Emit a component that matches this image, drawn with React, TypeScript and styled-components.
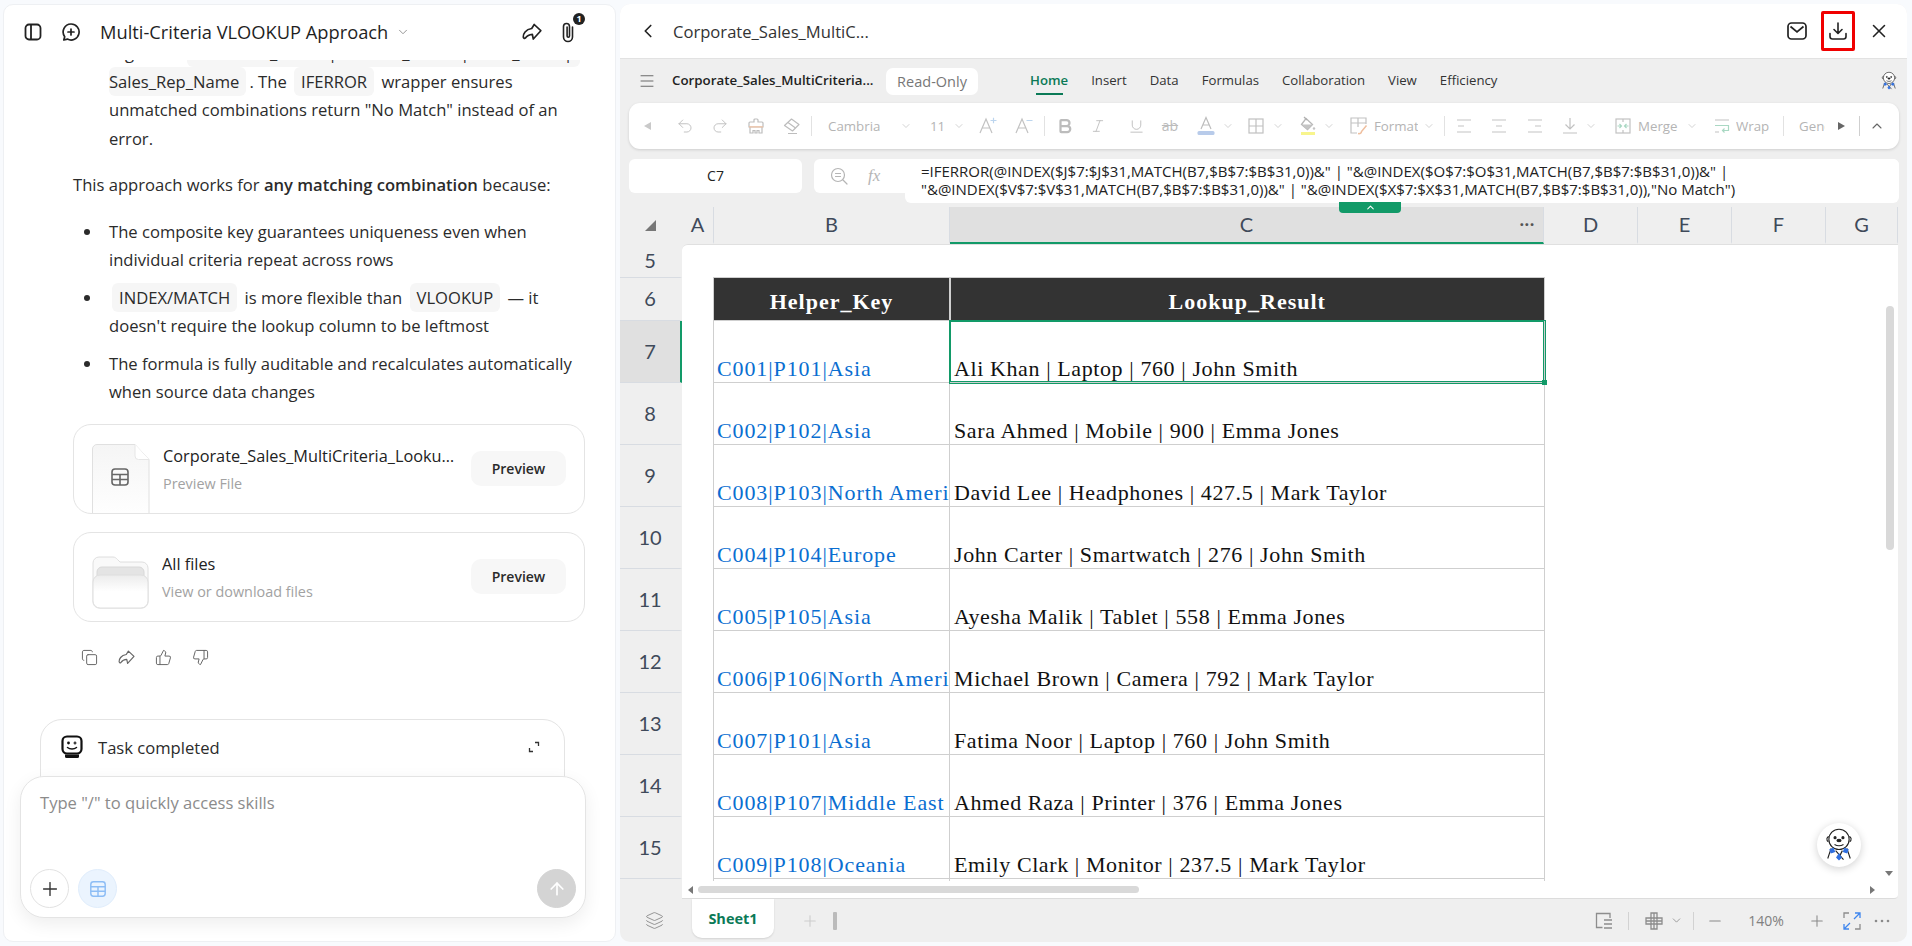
import React from 'react';
import styled, { createGlobalStyle } from 'styled-components';
import {
  ArrowUp,
  Bold,
  ChevronDown,
  ChevronLeft,
  ChevronUp,
  Copy,
  Italic,
  Layers,
  Menu,
  Minus,
  Plus,
  Redo2,
  ThumbsDown,
  ThumbsUp,
  Underline,
  Undo2,
  X,
} from 'lucide-react';

const sans = '"Open Sans", "Noto Sans", sans-serif';
const serif = '"Liberation Serif", serif';

const GlobalStyle = createGlobalStyle`
  html, body {
    margin: 0;
    height: 100%;
    overflow: hidden;
    background: #f8fafd;
    font-family: ${sans};
  }
  * { box-sizing: border-box; }
`;

const Page = styled.div`
  display: grid;
  grid-template-columns: 613px 1287px;
  gap: 4px;
  height: 946px;
  padding: 4px 0 4px 3px;
`;

/* ---------- chat side ---------- */

const ChatPanel = styled.section`
  display: flex;
  flex-direction: column;
  background: #fff;
  border-radius: 10px;
  border: 1px solid #eef0f3;
  overflow: hidden;
`;

const ChatHeader = styled.header`
  display: flex;
  align-items: center;
  flex: none;
  height: 55px;
  padding: 0 0 2px 19px;
  color: #1d1d1d;
`;

const HeaderIcon = styled.span<{ $ml?: number }>`
  display: flex;
  margin-left: ${(p) => p.$ml ?? 0}px;
`;

const ChatTitle = styled.h1`
  margin: 0 0 0 19px;
  width: 290px;
  font-size: 18.3px;
  font-weight: 400;
  color: #1f1f1f;
  white-space: nowrap;
`;

const ClipWrap = styled.span`
  position: relative;
  display: flex;
  margin-left: 16px;
`;

const CountBadge = styled.span`
  position: absolute;
  top: -8px;
  right: -7px;
  width: 12px;
  height: 12px;
  border-radius: 50%;
  background: #222;
  color: #fff;
  font-size: 9px;
  font-weight: 700;
  line-height: 12px;
  text-align: center;
`;

const ChatScroll = styled.div`
  flex: 1;
  min-height: 0;
  overflow: hidden;
  padding: 0 30px 0 69px;
  font-size: 16.6px;
  color: #2b2b2b;
`;

const NestedText = styled.p`
  margin: -21px 0 0;
  padding-left: 36px;
  line-height: 28.5px;
  white-space: nowrap;
`;

const Para = styled.p`
  margin: 18px 0 0;
  line-height: 28.5px;
  white-space: nowrap;

  strong {
    font-weight: 600;
  }
`;

const Points = styled.ul`
  margin: 18px 0 0;
  padding: 0 0 0 36px;
  list-style: none;
`;

const Point = styled.li`
  position: relative;
  line-height: 28px;
  white-space: nowrap;

  & + & {
    margin-top: 10px;
  }

  &::before {
    content: '';
    position: absolute;
    left: -25px;
    top: 11px;
    width: 6px;
    height: 6px;
    border-radius: 50%;
    background: #2b2b2b;
  }
`;

const Code = styled.code<{ $flush?: boolean }>`
  font-family: inherit;
  background: #f6f6f6;
  border-radius: 6px;
  padding: 3px 7px 3px ${(p) => (p.$flush ? 0 : 7)}px;
  margin: 0 3px 0 ${(p) => (p.$flush ? 0 : 3)}px;
`;

const FileCard = styled.div`
  display: flex;
  height: 90px;
  margin-top: 18px;
  padding-left: 18px;
  border: 1px solid #e4e4e4;
  border-radius: 18px;
  overflow: hidden;
  align-items: center;
`;

const CardIcon = styled.span<{ $top: number }>`
  flex: none;
  display: flex;
  align-self: flex-start;
  margin-top: ${(p) => p.$top}px;
`;

const CardText = styled.div`
  flex: 1;
  min-width: 0;
  margin-left: 13px;
`;

const CardName = styled.div`
  font-size: 16.3px;
  line-height: 22px;
  color: #222;
  white-space: nowrap;
  overflow: hidden;
  text-overflow: ellipsis;
`;

const CardSub = styled.div`
  margin-top: 8px;
  font-size: 14.4px;
  line-height: 18px;
  color: #a2a2a2;
`;

const PreviewButton = styled.button`
  flex: none;
  width: 95px;
  height: 35px;
  margin: 0 18px 0 13px;
  border: 0;
  border-radius: 10px;
  background: #f7f7f7;
  font-family: inherit;
  font-size: 14px;
  font-weight: 600;
  color: #2a2a2a;
`;

const Actions = styled.div`
  display: flex;
  align-items: center;
  gap: 20px;
  margin: 27px 0 0 8px;
  color: #666;
`;

const TaskCard = styled.div`
  display: flex;
  align-items: center;
  flex: none;
  height: 62px;
  margin: 0 50px -5px 36px;
  padding: 0 24px 6px 20px;
  border: 1px solid #e4e4e4;
  border-radius: 22px 22px 0 0;
  font-size: 16.6px;
  color: #2b2b2b;
`;

const TaskLabel = styled.span`
  flex: 1;
  margin-left: 15px;
`;

const InputBox = styled.div`
  position: relative;
  display: flex;
  flex-direction: column;
  justify-content: space-between;
  flex: none;
  height: 142px;
  margin: 0 29px 23px 16px;
  padding: 15px 9px 9px 9px;
  background: #fff;
  border: 1px solid #e4e4e4;
  border-radius: 24px;
  box-shadow: 0 6px 18px rgba(0, 0, 0, 0.07);
`;

const Placeholder = styled.div`
  padding-left: 10px;
  font-size: 16.6px;
  line-height: 22px;
  color: #8b8b8b;
`;

const InputTools = styled.div`
  display: flex;
  align-items: center;
  gap: 9px;
`;

const RoundButton = styled.span<{ $tone: 'plain' | 'blue' | 'send' }>`
  display: flex;
  align-items: center;
  justify-content: center;
  width: 39px;
  height: 39px;
  border-radius: 50%;
  margin-left: ${(p) => (p.$tone === 'send' ? 'auto' : '0')};
  color: ${(p) => (p.$tone === 'blue' ? '#8dbdf5' : p.$tone === 'send' ? '#fff' : '#333')};
  background: ${(p) => (p.$tone === 'blue' ? '#ebf4fe' : p.$tone === 'send' ? '#d4d4d4' : '#fff')};
  border: 1px solid ${(p) => (p.$tone === 'plain' ? '#e2e2e2' : p.$tone === 'blue' ? '#e0edfc' : '#d4d4d4')};
`;

/* ---------- sheet side ---------- */

const SheetPanel = styled.section`
  display: flex;
  flex-direction: column;
  background: #efefef;
  border-radius: 10px;
  overflow: hidden;
`;

const DocHeader = styled.header`
  display: flex;
  align-items: center;
  flex: none;
  height: 55px;
  padding: 0 11px 0 17px;
  background: #fff;
  border-bottom: 1px solid #e2e2e2;
  color: #222;
`;

const DocTitle = styled.div`
  flex: 1;
  margin-left: 14px;
  font-size: 16.6px;
  color: #333;
`;

const DocAction = styled.span<{ $marked?: boolean }>`
  display: flex;
  align-items: center;
  justify-content: center;
  width: 34px;
  height: 40px;
  margin-left: 7px;
  border: ${(p) => (p.$marked ? '3px solid #f00000' : '0')};
  border-radius: 2px;
`;

const MenuRow = styled.div`
  display: flex;
  align-items: center;
  flex: none;
  height: 44px;
  padding-left: 18px;
  color: #666;
`;

const FileName = styled.strong`
  width: 214px;
  margin: 0 0 2px 16px;
  font-size: 13.3px;
  font-weight: 600;
  color: #222;
  white-space: nowrap;
`;

const ReadOnly = styled.span`
  width: 92px;
  height: 27px;
  background: #fff;
  border-radius: 7px;
  font-size: 14.5px;
  line-height: 28px;
  text-align: center;
  color: #777;
`;

const TabList = styled.nav`
  display: flex;
  gap: 23px;
  margin: -3px 0 0 52px;
  align-items: center;
`;

const MenuTab = styled.span<{ $active?: boolean }>`
  position: relative;
  font-size: 13.2px;
  font-weight: ${(p) => (p.$active ? 600 : 400)};
  color: ${(p) => (p.$active ? '#0b7a57' : '#333')};

  &::after {
    content: '';
    display: ${(p) => (p.$active ? 'block' : 'none')};
    position: absolute;
    left: 6px;
    right: 5px;
    bottom: -6px;
    height: 2px;
    background: #0b7a57;
  }
`;

const MenuEnd = styled.span`
  display: flex;
  margin-left: auto;
  margin-right: 8px;
`;

const Ribbon = styled.div`
  display: flex;
  align-items: center;
  flex: none;
  height: 46px;
  margin: 0 8px 0 9px;
  padding-left: 6px;
  background: #fff;
  border-radius: 11px;
  box-shadow: 0 1px 3px rgba(0, 0, 0, 0.14);
  color: #bcbcbc;
`;

const RibbonSlot = styled.span<{ $ml: number; $w?: number; $strong?: boolean }>`
  flex: none;
  display: flex;
  align-items: center;
  justify-content: center;
  width: ${(p) => p.$w ?? 24}px;
  margin-left: ${(p) => p.$ml}px;
  color: ${(p) => (p.$strong ? '#666' : 'inherit')};
`;

const RibbonText = styled.span<{ $ml: number; $w: number }>`
  flex: none;
  width: ${(p) => p.$w}px;
  margin-left: ${(p) => p.$ml}px;
  overflow: hidden;
  font-size: 13.3px;
  color: #b4b4b4;
  white-space: nowrap;
`;

const StruckText = styled.span`
  font-size: 14px;
  line-height: 16px;
  color: #bcbcbc;
  text-decoration: line-through;
`;

const RibbonSep = styled.span<{ $ml: number; $dark?: boolean }>`
  flex: none;
  width: 1px;
  height: 20px;
  margin-left: ${(p) => p.$ml}px;
  background: ${(p) => (p.$dark ? '#cfcfcf' : '#e2e2e2')};
`;

const FormulaRow = styled.div`
  position: relative;
  display: flex;
  flex: none;
  gap: 12px;
  height: 34px;
  margin: 10px 8px 14px 9px;
`;

const NameBox = styled.div`
  width: 173px;
  background: #fff;
  border-radius: 6px;
  font-size: 14px;
  line-height: 34px;
  text-align: center;
  color: #222;
`;

const FxBox = styled.div`
  display: flex;
  align-items: center;
  flex: 1;
  padding-left: 16px;
  gap: 20px;
  background: #fff;
  border-radius: 6px;
  color: #b5b5b5;
`;

const FxLabel = styled.span`
  font-family: ${serif};
  font-size: 17px;
  font-style: italic;
`;

const FormulaOverlay = styled.div`
  position: absolute;
  z-index: 5;
  top: 0;
  left: 276px;
  right: 0;
  height: 44px;
  padding: 3px 10px 0 16px;
  background: #fff;
  border-radius: 6px;
  font-size: 15px;
  line-height: 18px;
  color: #222;
  white-space: nowrap;
`;

const HeaderRow = styled.div`
  display: flex;
  flex: none;
  height: 37px;
  margin-right: 9px;
  overflow: visible;
`;

const Corner = styled.div`
  display: flex;
  align-items: center;
  width: 64px;
  padding-left: 25px;
`;

const ColHead = styled.div<{ $w: number; $active?: boolean }>`
  position: relative;
  flex: none;
  width: ${(p) => p.$w}px;
  height: 37px;
  font-family: Lato, sans-serif;
  font-size: 20px;
  line-height: 35px;
  text-align: center;
  color: #3f4a5a;
  background: ${(p) => (p.$active ? '#e0e0e0' : 'transparent')};
  border-right: 1px solid #d8dce2;
  border-bottom: 2px solid ${(p) => (p.$active ? '#129a68' : 'transparent')};
`;

const ColDots = styled.span`
  position: absolute;
  right: 8px;
  top: -1px;
  font-size: 15px;
  font-weight: 700;
  color: #555;
  letter-spacing: 1px;
`;

const CollapseTab = styled.span`
  position: absolute;
  z-index: 6;
  top: -5px;
  left: 389px;
  display: flex;
  justify-content: center;
  width: 62px;
  height: 11px;
  background: #129a68;
  border-radius: 0 0 4px 4px;
  color: #fff;
`;

const SheetBody = styled.div`
  display: flex;
  flex: 1;
  min-height: 0;
  margin-right: 9px;
`;

const RowHeads = styled.div`
  flex: none;
  width: 62px;
  overflow: hidden;
`;

const RowHead = styled.div<{ $h: number; $active?: boolean }>`
  height: ${(p) => p.$h}px;
  font-family: Lato, sans-serif;
  font-size: 20px;
  line-height: ${(p) => p.$h - 2}px;
  text-align: center;
  color: #3f4a5a;
  background: ${(p) => (p.$active ? '#e0e0e0' : 'transparent')};
  border-bottom: 1px solid #d8dce2;
  border-right: 2px solid ${(p) => (p.$active ? '#129a68' : 'transparent')};
`;

const Surface = styled.div`
  position: relative;
  display: flex;
  flex-direction: column;
  flex: 1;
  min-width: 0;
  background: #fff;
  border-top: 1px solid #e0e0e0;
  border-bottom: 1px solid #dcdcdc;
  border-radius: 6px 0 4px 0;
`;

const TableClip = styled.div`
  flex: 1;
  min-height: 0;
  overflow: hidden;
  padding-left: 31px;
`;

const TableRow = styled.div<{ $h: number }>`
  display: grid;
  grid-template-columns: 237px 594.5px;
  height: ${(p) => p.$h}px;
`;

const HeadCell = styled.div`
  display: flex;
  align-items: center;
  justify-content: center;
  padding-top: 5px;
  background: #333;
  border: 1px solid #cfcfcf;
  font-family: ${serif};
  font-size: 22px;
  font-weight: 700;
  letter-spacing: 1px;
  color: #fff;
`;

const Cell = styled.div<{ $link?: boolean; $active?: boolean }>`
  position: relative;
  z-index: ${(p) => (p.$active ? 1 : 0)};
  display: flex;
  align-items: flex-end;
  overflow: ${(p) => (p.$active ? 'visible' : 'hidden')};
  padding: 0 0 1px ${(p) => (p.$link ? 3 : 4)}px;
  border-right: 1px solid #cfcfcf;
  border-bottom: 1px solid #cfcfcf;
  border-left: ${(p) => (p.$link ? '1px solid #cfcfcf' : '0')};
  font-family: ${serif};
  font-size: 22px;
  line-height: 24px;
  letter-spacing: ${(p) => (p.$link ? 0.9 : 0.6)}px;
  white-space: nowrap;
  color: ${(p) => (p.$link ? '#0a6ed1' : '#111')};
  box-shadow: ${(p) => (p.$active ? '0 0 0 1px #129a68, inset 0 0 0 1px #129a68' : 'none')};

  &::after {
    content: '';
    display: ${(p) => (p.$active ? 'block' : 'none')};
    position: absolute;
    right: -3px;
    bottom: -3px;
    width: 5px;
    height: 5px;
    background: #129a68;
  }
`;

const HScrollTrack = styled.div`
  display: flex;
  align-items: center;
  flex: none;
  height: 17px;
  padding-left: 6px;
  gap: 5px;
`;

const ArrowLeft = styled.span`
  width: 0;
  height: 0;
  border: 4px solid transparent;
  border-left: 0;
  border-right: 5px solid #777;
`;

const HThumb = styled.span`
  width: 441px;
  height: 7px;
  border-radius: 4px;
  background: #d9d9d9;
`;

const VThumb = styled.span`
  position: absolute;
  top: 61px;
  right: 4px;
  width: 8px;
  height: 244px;
  border-radius: 4px;
  background: #d9d9d9;
`;

const ArrowDownMark = styled.span`
  position: absolute;
  right: 5px;
  bottom: 22px;
  width: 0;
  height: 0;
  border: 4px solid transparent;
  border-bottom: 0;
  border-top: 5px solid #777;
`;

const ArrowRightMark = styled.span`
  position: absolute;
  right: 23px;
  bottom: 4px;
  width: 0;
  height: 0;
  border: 4px solid transparent;
  border-right: 0;
  border-left: 5px solid #777;
`;

const FloatBot = styled.span`
  position: absolute;
  right: 37px;
  bottom: 31px;
  display: flex;
  align-items: center;
  justify-content: center;
  width: 44px;
  height: 44px;
  border-radius: 50%;
  background: #fff;
  box-shadow: 0 2px 8px rgba(0, 0, 0, 0.18);
`;

const TabBar = styled.footer`
  display: flex;
  flex: none;
  height: 43px;
  padding-left: 25px;
  color: #8a8a8a;
`;

const TabBarIcon = styled.span`
  display: flex;
  align-self: center;
  width: 47px;
  color: #8f8f8f;
`;

const SheetTab = styled.span`
  width: 82px;
  height: 39px;
  background: #fff;
  border-radius: 0 0 10px 10px;
  box-shadow: 0 1px 2px rgba(0, 0, 0, 0.12);
  font-size: 14.5px;
  font-weight: 700;
  line-height: 39px;
  text-align: center;
  color: #0b7a57;
`;

const AddSheet = styled.span`
  display: flex;
  align-self: center;
  margin-left: 27px;
  color: #cdcdcd;
`;

const Handle = styled.span`
  align-self: center;
  width: 4px;
  height: 18px;
  margin-left: 14px;
  border-radius: 1px;
  background: #bbb;
`;

const StatusTools = styled.div`
  display: flex;
  align-items: center;
  margin-left: auto;
  padding-right: 17px;
`;

const StatusItem = styled.span<{ $ml: number }>`
  display: flex;
  margin-left: ${(p) => p.$ml}px;
  color: #8a8a8a;
`;

const StatusDivider = styled.span<{ $ml: number }>`
  width: 1px;
  height: 18px;
  margin-left: ${(p) => p.$ml}px;
  background: #d2d2d2;
`;

const Zoom = styled.span`
  width: 50px;
  margin-left: 17px;
  font-size: 14px;
  text-align: center;
  color: #808080;
`;

/* ---------- drawn icons ---------- */

const SidebarIcon = () => (
  <svg width="20" height="20" viewBox="0 0 20 20" fill="none" stroke="#222" strokeWidth="1.8">
    <rect x="2.5" y="2.5" width="15" height="15" rx="3.5" />
    <path d="M8 2.5v15" />
  </svg>
);

const NewChatIcon = () => (
  <svg width="20" height="20" viewBox="0 0 20 20" fill="none" stroke="#222" strokeWidth="1.7" strokeLinecap="round">
    <path d="M10 2a8 8 0 1 1-3.6 15.1L2.8 18l.9-3.3A8 8 0 0 1 10 2z" strokeLinejoin="round" />
    <path d="M10 7v6M7 10h6" />
  </svg>
);

const ShareIcon = ({ size = 20, color = '#222', stroke = 1.7 }: { size?: number; color?: string; stroke?: number }) => (
  <svg width={size} height={size} viewBox="0 0 20 20" fill="none" stroke={color} strokeWidth={stroke} strokeLinejoin="round">
    <path d="M12.200 2.500L18.800 8.700 11.300 17 10.300 12.300C7 12.500 4.800 14 3.200 16.200 2.500 16.800 1.500 16 1.300 15 1 12 3.500 7.500 9.700 6.500z" />
  </svg>
);

const ClipIcon = () => (
  <svg width="20" height="22" viewBox="0 0 20 22" fill="none" stroke="#222" strokeWidth="1.6" strokeLinecap="round">
    <path d="M14.500 6v10a4.500 4.500 0 0 1-9 0V5.500a3 3 0 0 1 6 0V15a1.200 1.200 0 0 1-2.400 0V6" />
  </svg>
);

const TableGlyph = ({ size = 20, color = '#666' }: { size?: number; color?: string }) => (
  <svg width={size} height={size} viewBox="0 0 20 20" fill="none" stroke={color} strokeWidth="1.6">
    <rect x="2" y="2" width="16" height="16" rx="3" />
    <path d="M2 7.500h16M2 12.500h16M10 7.500V18" />
  </svg>
);

const DocSheet = () => (
  <svg width="58" height="76" viewBox="0 0 58 76" fill="none">
    <defs>
      <linearGradient id="docfill" x1="0" y1="0" x2="0" y2="1">
        <stop offset="0" stopColor="#f5f5f5" />
        <stop offset="1" stopColor="#fff" />
      </linearGradient>
    </defs>
    <path d="M5 .5h38l14 15V76H.5V5A4.500 4.500 0 0 1 5 .5z" fill="url(#docfill)" stroke="#e0e0e0" />
    <path d="M43 .5V12a3.500 3.500 0 0 0 3.500 3.500H57" fill="#fff" stroke="#e6e6e6" />
    <g transform="translate(18 23)">
      <TableGlyph />
    </g>
  </svg>
);

const FolderSheet = () => (
  <svg width="57" height="53" viewBox="0 0 57 53" fill="none">
    <defs>
      <linearGradient id="folderfill" x1="0" y1="0" x2="0" y2="1">
        <stop offset="0" stopColor="#ececec" />
        <stop offset="0.5" stopColor="#fff" />
      </linearGradient>
    </defs>
    <path d="M7 1h14c2 0 3 1 4.500 2.500L28 6h22a6 6 0 0 1 6 6v34a6 6 0 0 1-6 6H7a6 6 0 0 1-6-6V7a6 6 0 0 1 6-6z" fill="#f9f9f9" stroke="#dedede" />
    <rect x="5" y="11" width="47" height="22" rx="5" fill="#e4e4e4" stroke="#d8d8d8" />
    <rect x="1" y="19" width="55" height="33" rx="7" fill="url(#folderfill)" stroke="#dedede" />
  </svg>
);

const TaskBot = () => (
  <svg width="22" height="24" viewBox="0 0 22 24" fill="none">
    <rect x="1.500" y="1.500" width="19" height="17" rx="4.500" fill="#fff" stroke="#111" strokeWidth="2.200" />
    <path d="M4 19.500h14v2a1.500 1.500 0 0 1-1.500 1.500h-11A1.500 1.500 0 0 1 4 21.500z" fill="#111" />
    <circle cx="7.500" cy="8" r="1.400" fill="#111" />
    <path d="M14 6.500v3M12.500 8h3" stroke="#111" strokeWidth="1.200" />
    <path d="M6.500 12.500c2.500 2 6.500 2 9 0" stroke="#111" strokeWidth="1.500" strokeLinecap="round" />
  </svg>
);

const ExpandSmall = () => (
  <svg width="12" height="12" viewBox="0 0 12 12" fill="none" stroke="#333" strokeWidth="1.300">
    <path d="M7 1.500h3.500V5M5 10.500H1.500V7" />
  </svg>
);

const BotFace = ({ size }: { size: number }) => (
  <svg width={size} height={size} viewBox="0 0 32 32" fill="none" stroke="#222" strokeWidth="1">
    <circle cx="16" cy="11" r="9" fill="#fff" />
    <path d="M7 8.500c-2 0-2.500 3.500-.5 4.500M25 8.500c2 0 2.500 3.500.5 4.500" />
    <circle cx="12.500" cy="9.500" r="0.900" fill="#222" />
    <circle cx="19.500" cy="9.500" r="0.900" fill="#222" />
    <ellipse cx="16" cy="12" rx="1.800" ry="1.100" fill="#222" />
    <path d="M12 15.500c2.500 1.500 5.500 1.500 8 0" />
    <path d="M9 19l-3 9M23 19l3 9M13 21l7 8M19 21l-2 4" />
    <path d="M8 20l3-1 1 3-3 1zM24 20l-3-1-1 3 3 1zM16 24l2 3-2 2-2-2z" fill="#2f6fe0" stroke="#2f6fe0" />
  </svg>
);

const AlignGlyph = ({ mode }: { mode: 'left' | 'center' | 'right' }) => {
  const x = mode === 'left' ? 3 : mode === 'center' ? 6 : 9;
  return (
    <svg width="18" height="16" viewBox="0 0 18 16" fill="none" stroke="#c4c4c4" strokeWidth="1.200">
      <path d="M2 2h14M2 14h14" />
      <path d={`M${x} 8h6`} />
    </svg>
  );
};

const PainterGlyph = () => (
  <svg width="18" height="18" viewBox="0 0 18 18" fill="none" stroke="#bdbdbd" strokeWidth="1.200">
    <path d="M7 5V3a1 1 0 0 1 1-1h2a1 1 0 0 1 1 1v2h4a1 1 0 0 1 1 1v4H2V6a1 1 0 0 1 1-1z" />
    <path d="M3 10v6h3v-2.500h2V16h2v-2.500h2V16h3v-6" />
    <path d="M2 9.800h14" stroke="#f1c3a5" />
  </svg>
);

const EraserGlyph = () => (
  <svg width="18" height="18" viewBox="0 0 18 18" fill="none" stroke="#bdbdbd" strokeWidth="1.200" strokeLinejoin="round">
    <path d="M1.500 8.500L8.500 2l7.500 5.500-6.500 6.500z" />
    <path d="M5 5.500l7.500 5.500M5 16.500h9" />
  </svg>
);

const GrowFont = ({ sign }: { sign: 'up' | 'down' }) => (
  <svg width="20" height="18" viewBox="0 0 20 18" fill="none" strokeWidth="1.200">
    <path d="M2 16L8 2l6 14M4.500 11h7" stroke="#c2c2c2" />
    {sign === 'up' ? <path d="M12.500 3.500h6M15.500.8v5.400" stroke="#bcd5ee" /> : <path d="M12.500 3.500h6" stroke="#bcd5ee" />}
  </svg>
);

const ColorA = () => (
  <svg width="20" height="20" viewBox="0 0 20 20" fill="none">
    <path d="M5 13L10 1.500 15 13M6.800 9h6.400" stroke="#bdbdbd" strokeWidth="1.200" />
    <rect x="1.500" y="15" width="17" height="4" rx="1.500" fill="#b8cbea" />
  </svg>
);

const BorderGlyph = () => (
  <svg width="16" height="16" viewBox="0 0 16 16" fill="none" stroke="#c0c0c0" strokeWidth="1.200">
    <rect x="1" y="1" width="14" height="14" />
    <path d="M8 1v14M1 8h14" />
  </svg>
);

const BucketGlyph = () => (
  <svg width="18" height="20" viewBox="0 0 18 20" fill="none">
    <path d="M7 2.500L13.500 8.500 8.500 13.500 2.500 8.500z" fill="#fff" stroke="#b8b8b8" strokeWidth="1.300" />
    <path d="M2.500 8.500h11L8.500 13.500z" fill="#c4c4c4" />
    <path d="M5 1l3 3" stroke="#b0b0b0" strokeWidth="1.300" />
    <circle cx="15" cy="12.500" r="1.200" fill="#c4c4c4" />
    <rect x="2" y="16" width="14" height="3" fill="#f8f58d" />
  </svg>
);

const FormatGlyph = () => (
  <svg width="18" height="18" viewBox="0 0 18 18" fill="none" stroke="#c2c2c2" strokeWidth="1.200">
    <path d="M16 7V1H1v15h6M1 6h15M8 1v9" />
    <path d="M8 16.500c2 .5 3.500-.5 3.500-2l5-6" stroke="#efbf9f" strokeWidth="1.500" />
  </svg>
);

const DownLineGlyph = () => (
  <svg width="18" height="18" viewBox="0 0 18 18" fill="none" stroke="#c2c2c2" strokeWidth="1.200">
    <path d="M9 1v11M4.500 7.500L9 12l4.500-4.500M2 16h14" />
  </svg>
);

const MergeGlyph = () => (
  <svg width="16" height="16" viewBox="0 0 16 16" fill="none" stroke="#c2c2c2" strokeWidth="1.200">
    <rect x="1" y="1" width="14" height="14" />
    <path d="M8 1v3M8 12v3" />
    <path d="M2.500 8h3.500M4.500 6l2 2-2 2M13.500 8H10M11.500 6l-2 2 2 2" stroke="#a9d8c3" />
  </svg>
);

const WrapGlyph = () => (
  <svg width="16" height="16" viewBox="0 0 16 16" fill="none" stroke="#c2c2c2" strokeWidth="1.200">
    <path d="M1 2h14M1 14h4" />
    <path d="M1 7.500h13.500v5H8.500M10.500 10.500l-2 2 2 2" stroke="#a9d8c3" />
  </svg>
);

const FindGlyph = () => (
  <svg width="18" height="18" viewBox="0 0 18 18" fill="none" stroke="#b5b5b5" strokeWidth="1.200" strokeLinecap="round">
    <circle cx="8" cy="8" r="6.500" />
    <path d="M13 13l4 4M5.500 6.500h5M5.500 9.500h5" />
  </svg>
);

const SmallTriangle = ({ dir, color }: { dir: 'left' | 'right'; color: string }) => (
  <svg width="9" height="10" viewBox="0 0 9 10">
    <path d={dir === 'left' ? 'M8 1v8L1 5z' : 'M1 1v8l7-4z'} fill={color} />
  </svg>
);

const CornerTriangle = () => (
  <svg width="11" height="11" viewBox="0 0 11 11">
    <path d="M11 0v11H0z" fill="#777" />
  </svg>
);

const SheetListGlyph = () => (
  <svg width="18" height="18" viewBox="0 0 18 18" fill="none" stroke="#8d8d8d" strokeWidth="1.300">
    <path d="M15 6V1.500H1.500v14h6M9 8h8M9 12h8M9 16h8" />
  </svg>
);

const FreezeGlyph = () => (
  <svg width="18" height="18" viewBox="0 0 18 18" fill="none" stroke="#8d8d8d" strokeWidth="1.300">
    <path d="M6 1h6v5h5v6h-5v5H6v-5H1V6h5z" />
    <path d="M6 6h6v6H6zM1 9h16M9 1v16" />
  </svg>
);

const FitGlyph = () => (
  <svg width="18" height="18" viewBox="0 0 18 18" fill="none" strokeWidth="1.300">
    <path d="M1 6V1h5M17 12v5h-5" stroke="#8d8d8d" />
    <path d="M12 1h5v5M17 1l-6 6M6 17H1v-5M1 17l6-6" stroke="#3f86ee" />
  </svg>
);

/* ---------- data ---------- */

const rows = [
  [7, 'C001|P101|Asia', 'Ali Khan | Laptop | 760 | John Smith'],
  [8, 'C002|P102|Asia', 'Sara Ahmed | Mobile | 900 | Emma Jones'],
  [9, 'C003|P103|North America', 'David Lee | Headphones | 427.5 | Mark Taylor'],
  [10, 'C004|P104|Europe', 'John Carter | Smartwatch | 276 | John Smith'],
  [11, 'C005|P105|Asia', 'Ayesha Malik | Tablet | 558 | Emma Jones'],
  [12, 'C006|P106|North America', 'Michael Brown | Camera | 792 | Mark Taylor'],
  [13, 'C007|P101|Asia', 'Fatima Noor | Laptop | 760 | John Smith'],
  [14, 'C008|P107|Middle East', 'Ahmed Raza | Printer | 376 | Emma Jones'],
  [15, 'C009|P108|Oceania', 'Emily Clark | Monitor | 237.5 | Mark Taylor'],
] as const;

const tabs = ['Home', 'Insert', 'Data', 'Formulas', 'Collaboration', 'View', 'Efficiency'];

const Caret = () => <ChevronDown size={12} strokeWidth={1.5} color="#c4c4c4" />;

const App: React.FC = () => {
  return (
    <Page>
      <GlobalStyle />

      <ChatPanel>
        <ChatHeader>
          <HeaderIcon>
            <SidebarIcon />
          </HeaderIcon>
          <HeaderIcon $ml={18}>
            <NewChatIcon />
          </HeaderIcon>
          <ChatTitle>Multi-Criteria VLOOKUP Approach</ChatTitle>
          <HeaderIcon $ml={6}>
            <ChevronDown size={14} strokeWidth={1.5} color="#888" />
          </HeaderIcon>
          <HeaderIcon $ml={112}>
            <ShareIcon />
          </HeaderIcon>
          <ClipWrap>
            <ClipIcon />
            <CountBadge>1</CountBadge>
          </ClipWrap>
        </ChatHeader>

        <ChatScroll>
          <NestedText>
            together. <Code>Customer_Name | Product_Name | Total_Sales |</Code>
            <br />
            <Code $flush>Sales_Rep_Name</Code>. The <Code>IFERROR</Code> wrapper ensures
            <br />
            unmatched combinations return "No Match" instead of an
            <br />
            error.
          </NestedText>
          <Para>
            This approach works for <strong>any matching combination</strong> because:
          </Para>
          <Points>
            <Point>
              The composite key guarantees uniqueness even when
              <br />
              individual criteria repeat across rows
            </Point>
            <Point>
              <Code>INDEX/MATCH</Code> is more flexible than <Code>VLOOKUP</Code> — it
              <br />
              doesn't require the lookup column to be leftmost
            </Point>
            <Point>
              The formula is fully auditable and recalculates automatically
              <br />
              when source data changes
            </Point>
          </Points>

          <FileCard>
            <CardIcon $top={19}>
              <DocSheet />
            </CardIcon>
            <CardText>
              <CardName>Corporate_Sales_MultiCriteria_Lookup_Result.xlsx</CardName>
              <CardSub>Preview File</CardSub>
            </CardText>
            <PreviewButton>Preview</PreviewButton>
          </FileCard>
          <FileCard>
            <CardIcon $top={23}>
              <FolderSheet />
            </CardIcon>
            <CardText>
              <CardName>All files</CardName>
              <CardSub>View or download files</CardSub>
            </CardText>
            <PreviewButton>Preview</PreviewButton>
          </FileCard>

          <Actions>
            <Copy size={17} strokeWidth={1.4} />
            <ShareIcon size={17} color="#666" stroke={1.4} />
            <ThumbsUp size={17} strokeWidth={1.4} />
            <ThumbsDown size={17} strokeWidth={1.4} />
          </Actions>
        </ChatScroll>

        <TaskCard>
          <TaskBot />
          <TaskLabel>Task completed</TaskLabel>
          <ExpandSmall />
        </TaskCard>
        <InputBox>
          <Placeholder>Type "/" to quickly access skills</Placeholder>
          <InputTools>
            <RoundButton $tone="plain">
              <Plus size={22} strokeWidth={1.5} />
            </RoundButton>
            <RoundButton $tone="blue">
              <TableGlyph size={18} color="#8dbdf5" />
            </RoundButton>
            <RoundButton $tone="send">
              <ArrowUp size={20} strokeWidth={2} />
            </RoundButton>
          </InputTools>
        </InputBox>
      </ChatPanel>

      <SheetPanel>
        <DocHeader>
          <ChevronLeft size={22} strokeWidth={1.8} />
          <DocTitle>Corporate_Sales_MultiC...</DocTitle>
          <DocAction>
            <svg width="20" height="18" viewBox="0 0 20 18" fill="none" stroke="#222" strokeWidth="1.700">
              <rect x="1" y="1" width="18" height="16" rx="3.500" />
              <path d="M3.500 4.500L10 10l6.500-5.500" />
            </svg>
          </DocAction>
          <DocAction $marked>
            <svg width="20" height="20" viewBox="0 0 20 20" fill="none" stroke="#222" strokeWidth="1.600" strokeLinecap="round" strokeLinejoin="round">
              <path d="M10 2v10M6 8.500l4 4 4-4M2 12.500v3a2.500 2.500 0 0 0 2.500 2.500h11a2.500 2.500 0 0 0 2.500-2.500v-3" />
            </svg>
          </DocAction>
          <DocAction>
            <X size={22} strokeWidth={1.7} />
          </DocAction>
        </DocHeader>

        <MenuRow>
          <Menu size={18} strokeWidth={1.3} />
          <FileName>Corporate_Sales_MultiCriteria...</FileName>
          <ReadOnly>Read-Only</ReadOnly>
          <TabList>
            {tabs.map((tab, i) => (
              <MenuTab key={tab} $active={i === 0}>
                {tab}
              </MenuTab>
            ))}
          </TabList>
          <MenuEnd>
            <BotFace size={20} />
          </MenuEnd>
        </MenuRow>

        <Ribbon>
          <RibbonSlot $ml={0}>
            <SmallTriangle dir="left" color="#c9c9c9" />
          </RibbonSlot>
          <RibbonSlot $ml={14}>
            <Undo2 size={18} strokeWidth={1.2} />
          </RibbonSlot>
          <RibbonSlot $ml={11}>
            <Redo2 size={18} strokeWidth={1.2} />
          </RibbonSlot>
          <RibbonSlot $ml={12}>
            <PainterGlyph />
          </RibbonSlot>
          <RibbonSlot $ml={12}>
            <EraserGlyph />
          </RibbonSlot>
          <RibbonSep $ml={7} />
          <RibbonText $ml={16} $w={52}>
            Cambria
          </RibbonText>
          <RibbonSlot $ml={20} $w={12}>
            <Caret />
          </RibbonSlot>
          <RibbonText $ml={18} $w={13}>
            11
          </RibbonText>
          <RibbonSlot $ml={10} $w={12}>
            <Caret />
          </RibbonSlot>
          <RibbonSlot $ml={11}>
            <GrowFont sign="up" />
          </RibbonSlot>
          <RibbonSlot $ml={12}>
            <GrowFont sign="down" />
          </RibbonSlot>
          <RibbonSep $ml={8} />
          <RibbonSlot $ml={8}>
            <Bold size={18} strokeWidth={3} />
          </RibbonSlot>
          <RibbonSlot $ml={9}>
            <Italic size={16} strokeWidth={1.3} />
          </RibbonSlot>
          <RibbonSlot $ml={14}>
            <Underline size={17} strokeWidth={1.3} />
          </RibbonSlot>
          <RibbonSlot $ml={10}>
            <StruckText>ab</StruckText>
          </RibbonSlot>
          <RibbonSlot $ml={12}>
            <ColorA />
          </RibbonSlot>
          <RibbonSlot $ml={4} $w={12}>
            <Caret />
          </RibbonSlot>
          <RibbonSlot $ml={10}>
            <BorderGlyph />
          </RibbonSlot>
          <RibbonSlot $ml={4} $w={12}>
            <Caret />
          </RibbonSlot>
          <RibbonSlot $ml={12}>
            <BucketGlyph />
          </RibbonSlot>
          <RibbonSlot $ml={3} $w={12}>
            <Caret />
          </RibbonSlot>
          <RibbonSlot $ml={12}>
            <FormatGlyph />
          </RibbonSlot>
          <RibbonText $ml={3} $w={44}>
            Format
          </RibbonText>
          <RibbonSlot $ml={5} $w={12}>
            <Caret />
          </RibbonSlot>
          <RibbonSep $ml={9} />
          <RibbonSlot $ml={7}>
            <AlignGlyph mode="left" />
          </RibbonSlot>
          <RibbonSlot $ml={11}>
            <AlignGlyph mode="center" />
          </RibbonSlot>
          <RibbonSlot $ml={12}>
            <AlignGlyph mode="right" />
          </RibbonSlot>
          <RibbonSlot $ml={11}>
            <DownLineGlyph />
          </RibbonSlot>
          <RibbonSlot $ml={3} $w={12}>
            <Caret />
          </RibbonSlot>
          <RibbonSlot $ml={14}>
            <MergeGlyph />
          </RibbonSlot>
          <RibbonText $ml={3} $w={41}>
            Merge
          </RibbonText>
          <RibbonSlot $ml={7} $w={12}>
            <Caret />
          </RibbonSlot>
          <RibbonSlot $ml={12}>
            <WrapGlyph />
          </RibbonSlot>
          <RibbonText $ml={2} $w={33}>
            Wrap
          </RibbonText>
          <RibbonSep $ml={14} />
          <RibbonText $ml={15} $w={26}>
            General
          </RibbonText>
          <RibbonSlot $ml={4} $strong>
            <SmallTriangle dir="right" color="#666" />
          </RibbonSlot>
          <RibbonSep $ml={6} $dark />
          <RibbonSlot $ml={5} $strong>
            <ChevronUp size={16} strokeWidth={1.6} />
          </RibbonSlot>
        </Ribbon>

        <FormulaRow>
          <NameBox>C7</NameBox>
          <FxBox>
            <FindGlyph />
            <FxLabel>fx</FxLabel>
          </FxBox>
          <FormulaOverlay>
            =IFERROR(@INDEX($J$7:$J$31,MATCH(B7,$B$7:$B$31,0))&amp;" | "&amp;@INDEX($O$7:$O$31,MATCH(B7,$B$7:$B$31,0))&amp;" |
            <br />
            "&amp;@INDEX($V$7:$V$31,MATCH(B7,$B$7:$B$31,0))&amp;" | "&amp;@INDEX($X$7:$X$31,MATCH(B7,$B$7:$B$31,0)),"No Match")
          </FormulaOverlay>
        </FormulaRow>

        <HeaderRow>
          <Corner>
            <CornerTriangle />
          </Corner>
          <ColHead $w={32}>A</ColHead>
          <ColHead $w={236}>B</ColHead>
          <ColHead $w={594} $active>
            C
            <CollapseTab>
              <ChevronUp size={11} strokeWidth={2.2} />
            </CollapseTab>
            <ColDots>···</ColDots>
          </ColHead>
          <ColHead $w={94}>D</ColHead>
          <ColHead $w={94}>E</ColHead>
          <ColHead $w={94}>F</ColHead>
          <ColHead $w={72}>G</ColHead>
        </HeaderRow>

        <SheetBody>
          <RowHeads>
            <RowHead $h={34}>5</RowHead>
            <RowHead $h={43}>6</RowHead>
            {rows.map(([n]) => (
              <RowHead key={n} $h={62} $active={n === 7}>
                {n}
              </RowHead>
            ))}
          </RowHeads>
          <Surface>
            <TableClip>
              <TableRow $h={32} />
              <TableRow $h={44}>
                <HeadCell>Helper_Key</HeadCell>
                <HeadCell>Lookup_Result</HeadCell>
              </TableRow>
              {rows.map(([n, key, result]) => (
                <TableRow key={n} $h={62}>
                  <Cell $link>{key}</Cell>
                  <Cell $active={n === 7}>{result}</Cell>
                </TableRow>
              ))}
              <TableRow $h={62}>
                <Cell $link />
                <Cell />
              </TableRow>
            </TableClip>
            <HScrollTrack>
              <ArrowLeft />
              <HThumb />
            </HScrollTrack>
            <VThumb />
            <ArrowDownMark />
            <ArrowRightMark />
            <FloatBot>
              <BotFace size={36} />
            </FloatBot>
          </Surface>
        </SheetBody>

        <TabBar>
          <TabBarIcon>
            <Layers size={19} strokeWidth={1.2} />
          </TabBarIcon>
          <SheetTab>Sheet1</SheetTab>
          <AddSheet>
            <Plus size={18} strokeWidth={1.5} />
          </AddSheet>
          <Handle />
          <StatusTools>
            <StatusItem $ml={0}>
              <SheetListGlyph />
            </StatusItem>
            <StatusDivider $ml={15} />
            <StatusItem $ml={16}>
              <FreezeGlyph />
            </StatusItem>
            <StatusItem $ml={7}>
              <ChevronDown size={13} strokeWidth={1.5} />
            </StatusItem>
            <StatusDivider $ml={10} />
            <StatusItem $ml={12}>
              <Minus size={18} strokeWidth={1.4} />
            </StatusItem>
            <Zoom>140%</Zoom>
            <StatusItem $ml={17}>
              <Plus size={18} strokeWidth={1.4} />
            </StatusItem>
            <StatusItem $ml={17}>
              <FitGlyph />
            </StatusItem>
            <StatusItem $ml={13}>
              <svg width="16" height="4" viewBox="0 0 16 4" fill="#8a8a8a">
                <circle cx="2" cy="2" r="1.300" />
                <circle cx="8" cy="2" r="1.300" />
                <circle cx="14" cy="2" r="1.300" />
              </svg>
            </StatusItem>
          </StatusTools>
        </TabBar>
      </SheetPanel>
    </Page>
  );
};

export default App;
